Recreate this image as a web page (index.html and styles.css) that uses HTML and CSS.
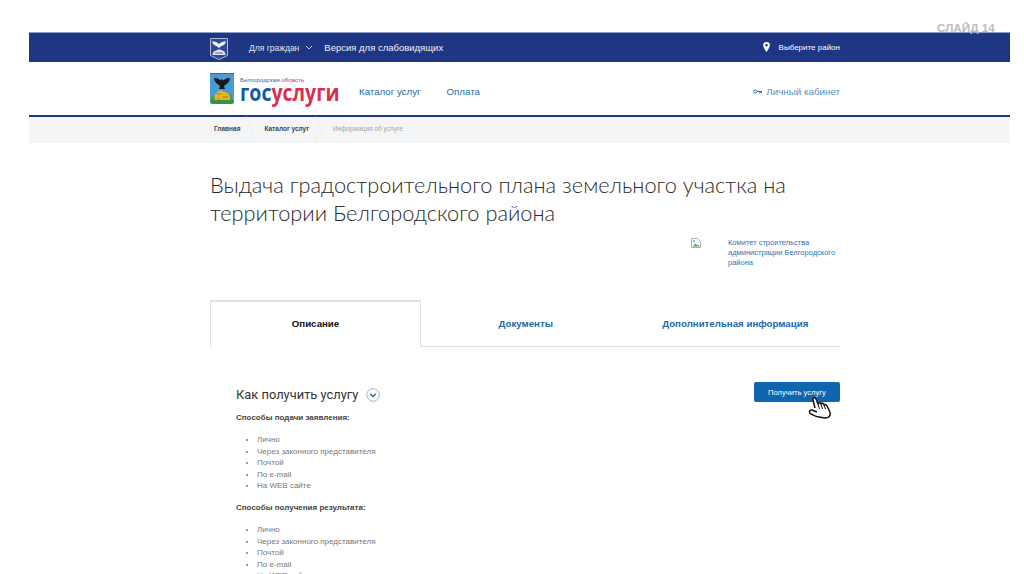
FILE: index.html
```html
<!DOCTYPE html>
<html lang="en">
<head>
    <meta charset="UTF-8">
    <title>Госуслуги Белгородская область</title>
    <link rel="stylesheet" href="styles.css">
</head>
<body>
    <div class="slide-label">СЛАЙД 14</div>

    <div class="page">
        <div class="top-bar">
            <div class="wrap top-bar-inner">
                <svg class="top-emblem" width="18" height="22" viewBox="0 0 18 22">
                    <path d="M.5.500h17v17l-8.500 4-8.500-4z" fill="#33498f" stroke="#aab6d6" stroke-width="1"/>
                    <path d="M2 3.500c3 0 5 .5 7 2.500 2-2 4-2.500 7-2.500-.5 2.500-2.500 4-4.500 4.500L9 10 6.500 8C4.500 7.500 2.500 6 2 3.500z" fill="#eef1f8"/>
                    <path d="M2.500 17c0-3 2-4.500 4-4.500 1-1.500 4.500-1.500 5.500 0 2 0 3.500 2 3.500 4.500z" fill="#dfe4f1"/>
                    <path d="M5 15h8" stroke="#33498f" stroke-width=".8"/>
                </svg>
                <span class="top-link">Для граждан</span>
                <svg class="top-chevron" width="8" height="5" viewBox="0 0 8 5"><path d="M1 1l3 3 3-3" fill="none" stroke="#c9d2e8" stroke-width="1"/></svg>
                <span class="top-link-big">Версия для слабовидящих</span>
                <span class="top-region">
                    <svg width="7" height="10" viewBox="0 0 7 10"><path d="M3.500 0a3.300 3.300 0 0 0-3.300 3.300c0 2.300 3.300 6.700 3.300 6.700s3.300-4.400 3.300-6.700A3.300 3.300 0 0 0 3.500 0zm0 4.600a1.300 1.300 0 1 1 0-2.600 1.300 1.300 0 0 1 0 2.600z" fill="#fff"/></svg>
                    Выберите район
                </span>
            </div>
        </div>

        <header class="site-header">
            <div class="wrap site-header-inner">
                <div class="logo">
                    <svg width="24" height="32" viewBox="0 0 24 32">
                        <path d="M0 0h24v28c0 2-1 3-3 3H3c-2 0-3-1-3-3z" fill="#4a9bd4"/>
                        <path d="M0 27h24v1c0 2-1 3-3 3H3c-2 0-3-1-3-3z" fill="#3f8f46"/>
                        <path d="M0 0h24v1H0z" fill="#2c6f9e"/>
                        <path d="M4 5c2.500 0 5 .5 6.500 2.500L12 6l1.500 1.500C15 5.500 17.500 5 20 5c-.5 3.500-2.500 6-5 7l-1 1.500 1 2.500h-6l1-2.500L9 12C6.500 11 4.500 8.500 4 5z" fill="#16181c"/>
                        <path d="M4 27c0-2 0-6 3-7 1-3 5-3 6-1 3 0 6 1 7 5l1 3z" fill="#e0b52a"/>
                        <path d="M7 20c1 2 3 2 4 0M13 24h5M8 25l1 2" stroke="#8a6a12" stroke-width=".8" fill="none"/>
                        <path d="M1 27l2.500-6 1.500 6zM20 20l1.500 2 .5 5h-2z" fill="#4f9a3c"/>
                    </svg>
                    <div class="logo-text">
                        <div class="logo-region">Белгородская <span class="logo-red">область</span></div>
                        <div class="logo-name">гос<span class="logo-red">услуги</span></div>
                    </div>
                </div>
                <nav class="main-nav">
                    <a href="#">Каталог услуг</a>
                    <a href="#">Оплата</a>
                </nav>
                <a class="cabinet" href="#">
                    <svg width="9" height="5" viewBox="0 0 9 5"><circle cx="2.200" cy="2.500" r="1.600" fill="none" stroke="#1d6cb0" stroke-width="1"/><path d="M4 2.500h5M7 2.500v2M8.500 2.500v1.500" stroke="#1d6cb0" stroke-width="1"/></svg>
                    Личный кабинет
                </a>
            </div>
        </header>

        <div class="crumbs">
            <div class="wrap crumbs-inner">
                <a class="crumb" href="#">Главная</a>
                <a class="crumb" href="#">Каталог услуг</a>
                <span class="crumb crumb-current">Информация об услуге</span>
            </div>
        </div>

        <main class="wrap">
            <h1 class="service-title">Выдача градостроительного плана земельного участка на территории Белгородского района</h1>

            <div class="agency">
                <svg class="broken-img" width="10" height="10" viewBox="0 0 10 10">
                    <path d="M.5.500h6l3 3v6h-9z" fill="#fff" stroke="#a9b0b8"/>
                    <path d="M1.500 8.500l3-3 2 2 1-1 1 2z" fill="#5aa64a"/>
                    <circle cx="3" cy="3" r="1.200" fill="#8fb6e0"/>
                </svg>
                <a class="agency-name" href="#">Комитет строительства администрации Белгородского района</a>
            </div>

            <div class="tabs">
                <div class="tab tab-active">Описание</div>
                <div class="tab">Документы</div>
                <div class="tab">Дополнительная информация</div>
            </div>

            <section class="details">
                <div class="details-text">
                    <h2 class="details-title">Как получить услугу
                        <svg width="14" height="14" viewBox="0 0 14 14"><circle cx="7" cy="7" r="6.300" fill="none" stroke="#9fb4cc" stroke-width="1"/><path d="M4.300 5.800L7 8.500l2.700-2.700" fill="none" stroke="#1d5f9e" stroke-width="1.300"/></svg>
                    </h2>
                    <p class="list-title">Способы подачи заявления:</p>
                    <ul class="ways">
                        <li>Лично</li>
                        <li>Через законного представителя</li>
                        <li>Почтой</li>
                        <li>По e-mail</li>
                        <li>На WEB сайте</li>
                    </ul>
                    <p class="list-title">Способы получения результата:</p>
                    <ul class="ways">
                        <li>Лично</li>
                        <li>Через законного представителя</li>
                        <li>Почтой</li>
                        <li>По e-mail</li>
                        <li>На WEB сайте</li>
                    </ul>
                </div>
                <div class="get-service">
                    <button class="get-button">Получить услугу</button>
                    <svg class="hand" width="25" height="24" viewBox="0 0 25 24">
                        <path d="M7 12L5 4C4.500 1.500 7.500 1 8 3l2 5c0-1.500 2.500-2 3 0 .5-1.500 3-1 3 1 1-1 3 0 3.500 2l2.500 5c1 4-1 6-5 6l-6-1c-3 0-6-2-8-3-2.500-1-2-4.500 1-4l5 2" fill="#fff" stroke="#111" stroke-width="1.500" stroke-linejoin="round"/>
                        <path d="M10 8l1.500 5M13 8l1.500 5M16 9l1.500 4" stroke="#111" stroke-width="1" fill="none"/>
                    </svg>
                </div>
            </section>
        </main>
    </div>
</body>
</html>
```

FILE: styles.css
```css
/* General Styling */
html, body {
    margin: 0;
    height: 574px;
    overflow: hidden;
}

body {
    background: #ffffff;
    font-family: 'Liberation Sans', Arial, sans-serif;
    color: #333333;
    padding: 32px 14px 0 29px;
    box-sizing: border-box;
}

a {
    text-decoration: none;
}

.wrap {
    width: 630px;
    margin-left: 181px;
}

/* Slide number on top of the page */
.slide-label {
    position: absolute;
    top: 21px;
    left: 937px;
    font-size: 11.700px;
    font-weight: bold;
    color: #bdbdbd;
}

/* Top Bar */
.top-bar {
    height: 30px;
    box-sizing: border-box;
    background: #1f3685;
    border-top: 1px solid #8e9fcb;
    color: #ffffff;
}

.top-bar-inner {
    display: flex;
    align-items: center;
    height: 29px;
}

.top-emblem {
    margin-right: 21px;
    margin-top: 2px;
}

.top-link {
    font-size: 8.500px;
    color: #dfe5f2;
}

.top-chevron {
    margin-left: 6px;
}

.top-link-big {
    font-size: 9.500px;
    margin-left: 11px;
    color: #f0f3fa;
}

.top-region {
    margin-left: auto;
    font-size: 8px;
    display: flex;
    align-items: center;
    gap: 9px;
    padding-bottom: 1px;
}

/* Site Header */
.site-header {
    height: 53px;
    background: #ffffff;
    border-bottom: 2px solid #1f3685;
}

.site-header-inner {
    display: flex;
    align-items: center;
    height: 53px;
}

.logo {
    display: flex;
    align-items: center;
    gap: 6px;
}

.logo-text {
    width: 100px;
    padding-bottom: 3px;
}

.logo-region {
    font-size: 6.200px;
    line-height: 7px;
    color: #1d6cb0;
}

/* the real wordmark is taller than any installed face */
.logo-name {
    font-family: 'Open Sans', sans-serif;
    font-size: 19.500px;
    font-weight: 700;
    line-height: 16px;
    color: #105da6;
    transform: scaleY(1.200);
    transform-origin: 0 0;
}

.logo-red {
    color: #d9304f;
}

.main-nav {
    display: flex;
    gap: 26px;
    margin-left: 19px;
    padding-top: 5px;
}

.main-nav a {
    font-size: 9.700px;
    color: #1d68ab;
}

.cabinet {
    margin-left: auto;
    padding-top: 5px;
    font-size: 9.800px;
    color: #5a8fbd;
    display: flex;
    align-items: center;
    gap: 4px;
}

/* Breadcrumbs */
.crumbs {
    height: 26px;
    background: #f4f5f7;
}

.crumbs-inner {
    display: flex;
    height: 23px;
    align-items: center;
}

.crumb {
    font-size: 6.500px;
    color: #444444;
    font-weight: bold;
    margin-left: 4px;
    margin-right: 20px;
    position: relative;
}

.crumb::after {
    content: "";
    position: absolute;
    top: -5px;
    right: -16px;
    width: 18px;
    height: 18px;
    border-top: 1px solid #e8e9ec;
    border-right: 1px solid #e8e9ec;
    transform: scaleX(0.450) rotate(45deg);
}

.crumb-current {
    font-weight: normal;
    color: #a5a5a5;
}

.crumb-current::after {
    display: none;
}

/* Service Title */
.service-title {
    font-family: Lato, sans-serif;
    font-size: 21.800px;
    font-weight: 300;
    line-height: 28px;
    color: #2b2b2b;
    margin: 28px 0 0;
}

/* Agency */
.agency {
    display: flex;
    margin: 11px 0 0 481px;
    height: 53px;
}

.broken-img {
    flex: none;
}

.agency-name {
    margin-left: 27px;
    margin-top: 0;
    font-size: 7.500px;
    line-height: 10px;
    color: #2a75b8;
}

/* Tabs */
.tabs {
    display: flex;
    height: 47px;
    margin-top: 9px;
    box-sizing: border-box;
    border-bottom: 1px solid #e2e2e2;
}

.tab {
    flex: 1;
    display: flex;
    align-items: center;
    justify-content: center;
    padding-top: 1px;
    font-size: 9.700px;
    font-weight: bold;
    color: #1d68ab;
}

.tab-active {
    flex: none;
    width: 211px;
    height: 47px;
    padding: 0 0 2px;
    box-sizing: border-box;
    color: #111111;
    background: #ffffff;
    border: 1px solid #e2e2e2;
    border-top-width: 2px;
    border-bottom: none;
}

/* Details */
.details {
    display: flex;
    justify-content: space-between;
    margin-top: 37px;
    padding-left: 26px;
}

.details-title {
    display: flex;
    align-items: center;
    gap: 8px;
    margin: 0 0 6px;
    font-family: Roboto, sans-serif;
    font-size: 12.900px;
    font-weight: 400;
    line-height: 22px;
    color: #333333;
}

.list-title {
    margin: 0;
    font-size: 8px;
    font-weight: bold;
    line-height: 12px;
    color: #444444;
}

.ways {
    margin: 10px 0 10.500px;
    padding: 0 0 0 21px;
    font-size: 8px;
    line-height: 11.500px;
    color: #777777;
}

.get-service {
    position: relative;
    margin-top: -2px;
}

.get-button {
    display: block;
    width: 86px;
    height: 20px;
    background: #0f65ae;
    color: #ffffff;
    border: none;
    border-radius: 2px;
    font-family: inherit;
    font-size: 7.600px;
    padding: 0;
}

.hand {
    position: absolute;
    top: 14px;
    left: 54px;
}
```
